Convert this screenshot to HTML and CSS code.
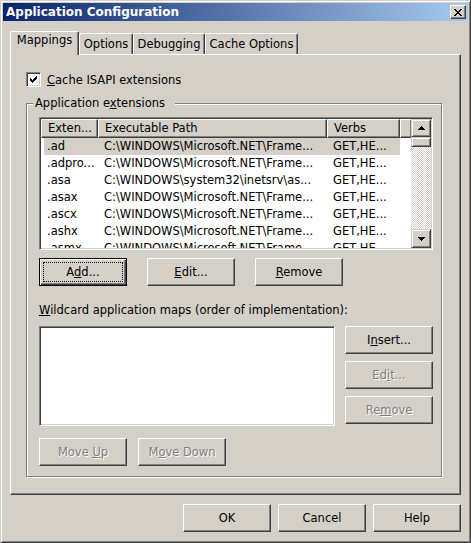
FILE: index.html
```html
<!DOCTYPE html>
<html>
<head>
<meta charset="utf-8">
<title>Application Configuration</title>
<link rel="stylesheet" href="styles.css">
</head>
<body>
<div class="window">
  <div class="titlebar">
    <span class="title">Application Configuration</span>
    <span class="close"><svg width="8" height="7" viewBox="0 0 8 7" shape-rendering="crispEdges"><path d="M0 0h2v1H0z M6 0h2v1H6z M1 1h2v1H1z M5 1h2v1H5z M2 2h4v1H2z M3 3h2v1H3z M2 4h4v1H2z M1 5h2v1H1z M5 5h2v1H5z M0 6h2v1H0z M6 6h2v1H6z" fill="#000"/></svg></span>
  </div>
  <div class="client">
    <div class="tabs">
      <div class="tab tab-active tab-mappings">Mappings</div>
      <div class="tab tab-options">Options</div>
      <div class="tab tab-debugging">Debugging</div>
      <div class="tab tab-cache">Cache Options</div>
    </div>
    <div class="panel">
      <div class="check-row">
        <span class="checkbox"><svg width="7" height="7" viewBox="0 0 7 7" shape-rendering="crispEdges"><path d="M6 0h1v1H6z M5 1h2v1H5z M0 2h1v1H0z M4 2h3v1H4z M0 3h2v1H0z M3 3h3v1H3z M0 4h5v1H0z M1 5h3v1H1z M2 6h1v1H2z" fill="#000"/></svg></span>
        <span><u>C</u>ache ISAPI extensions</span>
      </div>
      <div class="group">
        <div class="group-label">Application e<u>x</u>tensions</div>
        <div class="listview">
          <div class="lv-main">
            <div class="lv-header">
              <div class="hcell col-ext">Exten...</div>
              <div class="hcell col-path">Executable Path</div>
              <div class="hcell col-verbs">Verbs</div>
              <div class="hcell col-fill"></div>
            </div>
            <div class="lv-row selected"><div class="cell col-ext">.ad</div><div class="cell col-path">C:\WINDOWS\Microsoft.NET\Frame...</div><div class="cell col-verbs">GET,HE...</div></div>
            <div class="lv-row"><div class="cell col-ext">.adpro...</div><div class="cell col-path">C:\WINDOWS\Microsoft.NET\Frame...</div><div class="cell col-verbs">GET,HE...</div></div>
            <div class="lv-row"><div class="cell col-ext">.asa</div><div class="cell col-path">C:\WINDOWS\system32\inetsrv\as...</div><div class="cell col-verbs">GET,HE...</div></div>
            <div class="lv-row"><div class="cell col-ext">.asax</div><div class="cell col-path">C:\WINDOWS\Microsoft.NET\Frame...</div><div class="cell col-verbs">GET,HE...</div></div>
            <div class="lv-row"><div class="cell col-ext">.ascx</div><div class="cell col-path">C:\WINDOWS\Microsoft.NET\Frame...</div><div class="cell col-verbs">GET,HE...</div></div>
            <div class="lv-row"><div class="cell col-ext">.ashx</div><div class="cell col-path">C:\WINDOWS\Microsoft.NET\Frame...</div><div class="cell col-verbs">GET,HE...</div></div>
            <div class="lv-row"><div class="cell col-ext">.asmx</div><div class="cell col-path">C:\WINDOWS\Microsoft.NET\Frame...</div><div class="cell col-verbs">GET,HE...</div></div>
          </div>
          <div class="scrollbar">
            <div class="sb-btn sb-up"><svg width="7" height="4" viewBox="0 0 7 4" shape-rendering="crispEdges"><path d="M3 0h1v1H3z M2 1h3v1H2z M1 2h5v1H1z M0 3h7v1H0z" fill="#000"/></svg></div>
            <div class="sb-thumb"></div>
            <div class="sb-track"></div>
            <div class="sb-btn sb-down"><svg width="7" height="4" viewBox="0 0 7 4" shape-rendering="crispEdges"><path d="M0 0h7v1H0z M1 1h5v1H1z M2 2h3v1H2z M3 3h1v1H3z" fill="#000"/></svg></div>
          </div>
        </div>
        <div class="btn-row">
          <button class="btn btn-default"><span class="focus"><span>A<u>d</u>d...</span></span></button>
          <button class="btn"><span><u>E</u>dit...</span></button>
          <button class="btn"><span><u>R</u>emove</span></button>
        </div>
        <div class="wild-label"><u>W</u>ildcard application maps (order of implementation):</div>
        <div class="lower">
          <div class="listbox"></div>
          <div class="side-btns">
            <button class="btn"><span>I<u>n</u>sert...</span></button>
            <button class="btn btn-disabled"><span>Ed<u>i</u>t...</span></button>
            <button class="btn btn-disabled"><span>Re<u>m</u>ove</span></button>
          </div>
        </div>
        <div class="move-row">
          <button class="btn btn-disabled"><span>Move <u>U</u>p</span></button>
          <button class="btn btn-disabled"><span>M<u>o</u>ve Down</span></button>
        </div>
      </div>
    </div>
    <div class="footer">
      <button class="btn"><span>OK</span></button>
      <button class="btn"><span>Cancel</span></button>
      <button class="btn"><span>Help</span></button>
    </div>
  </div>
</div>
</body>
</html>
```

FILE: styles.css
```css
* { box-sizing: border-box; }
html, body { margin: 0; padding: 0; background: #d4d0c8; }
body {
  font-family: "DejaVu Sans", sans-serif;
  font-size: 11.5px;
  color: #000;
}
u { text-decoration: underline; text-underline-offset: 1px; }

.window {
  width: 471px;
  height: 543px;
  background: #d4d0c8;
  border: 1px solid;
  border-color: #d4d0c8 #404040 #404040 #d4d0c8;
  box-shadow: inset 1px 1px #fff, inset -1px -1px #808080;
  padding: 2px;
  display: flex;
  flex-direction: column;
}

.titlebar {
  height: 18px;
  flex: none;
  background: linear-gradient(90deg, #0a246a, #a6caf0);
  display: flex;
  align-items: center;
  justify-content: space-between;
  padding: 0 2px 0 3px;
  color: #fff;
  font-weight: bold;
  font-size: 12px;
  white-space: nowrap;
}
.close {
  width: 16px;
  height: 14px;
  background: #d4d0c8;
  border: 1px solid;
  border-color: #fff #404040 #404040 #fff;
  box-shadow: inset -1px -1px #808080;
  display: flex;
  align-items: center;
  justify-content: center;
}

.client {
  padding: 10px 7px 0 7px;
  display: flex;
  flex-direction: column;
}

.tabs {
  display: flex;
  align-items: flex-end;
  height: 23px;
}
.tab {
  height: 21px;
  border: 1px solid;
  border-bottom: none;
  border-color: #fff #404040 transparent #fff;
  box-shadow: inset -1px 0 #808080;
  border-radius: 2px 2px 0 0;
  display: flex;
  justify-content: center;
  align-items: flex-start;
  padding-top: 3px;
  line-height: 14px;
  background: #d4d0c8;
  white-space: nowrap;
}
.tab-active {
  height: 24px;
  margin-bottom: -1px;
  padding-top: 1px;
  position: relative;
  z-index: 1;
}
.tab-mappings { width: 69px; }
.tab-options { width: 54px; }
.tab-debugging { width: 72px; }
.tab-cache { width: 93px; }

.panel {
  width: 451px;
  height: 441px;
  border: 1px solid;
  border-color: #fff #404040 #404040 #fff;
  box-shadow: inset -1px -1px #808080;
  padding: 17px 0 0 15px;
}

.check-row {
  display: flex;
  align-items: center;
  gap: 6px;
  height: 15px;
  line-height: 14px;
}
.checkbox {
  width: 15px;
  height: 15px;
  background: #fff;
  border: 1px solid;
  border-color: #808080 #fff #fff #808080;
  box-shadow: inset 1px 1px #404040, inset -1px -1px #d4d0c8;
  display: flex;
  align-items: center;
  justify-content: center;
}

.group {
  width: 416px;
  margin-top: 16px;
  border: 1px solid #808080;
  box-shadow: inset 1px 1px #fff, 1px 1px #fff;
  padding: 0 0 10px 12px;
}
.group-label {
  width: fit-content;
  margin: -8px 0 0 -6px;
  padding: 0 10px 0 2px;
  background: #d4d0c8;
  line-height: 14px;
}

.listview {
  width: 394px;
  height: 133px;
  margin-top: 7px;
  border: 1px solid;
  border-color: #808080 #fff #fff #808080;
  box-shadow: inset 1px 1px #404040, inset -1px -1px #d4d0c8;
  padding: 1px;
  background: #fff;
  display: flex;
}
.lv-main {
  flex: 1;
  overflow: hidden;
  display: flex;
  flex-direction: column;
}
.lv-header {
  display: flex;
  height: 19px;
  flex: none;
}
.hcell {
  height: 19px;
  border: 1px solid;
  border-color: #fff #404040 #404040 #fff;
  box-shadow: inset -1px -1px #808080;
  background: #d4d0c8;
  padding: 0 4px 0 6px;
  line-height: 16px;
  white-space: nowrap;
  overflow: hidden;
  flex: none;
}
.col-ext { width: 57px; }
.col-path { width: 229px; }
.col-verbs { width: 73px; }
.hcell.col-fill { flex: 1; }

.lv-row {
  display: flex;
  flex: none;
  height: 17px;
  line-height: 17px;
  width: 359px;
}
.lv-row.selected {
  background: linear-gradient(#d4d0c8, #d4d0c8) 3px 0 / calc(100% - 3px) 100% no-repeat;
}
.cell {
  flex: none;
  padding-left: 6px;
  white-space: nowrap;
  overflow: hidden;
}

.scrollbar {
  width: 20px;
  flex: none;
  display: flex;
  flex-direction: column;
  background: repeating-conic-gradient(#d4d0c8 0 25%, #fff 0 50%) 0 0 / 2px 2px;
}
.sb-btn, .sb-thumb {
  flex: none;
  background: #d4d0c8;
  border: 1px solid;
  border-color: #d4d0c8 #404040 #404040 #d4d0c8;
  box-shadow: inset 1px 1px #fff, inset -1px -1px #808080;
  display: flex;
  align-items: center;
  justify-content: center;
}
.sb-up { height: 18px; }
.sb-thumb { height: 10px; }
.sb-track { flex: 1; }
.sb-down { height: 19px; }

.btn {
  width: 88px;
  height: 28px;
  margin: 0;
  padding: 0;
  font: inherit;
  color: #000;
  background: #d4d0c8;
  border: 1px solid;
  border-color: #fff #404040 #404040 #fff;
  box-shadow: inset -1px -1px #808080;
  display: flex;
  align-items: center;
  justify-content: center;
  white-space: nowrap;
}
.btn-default {
  border: 1px solid #000;
  box-shadow: inset 1px 1px #fff, inset -1px -1px #404040, inset -2px -2px #808080;
  padding: 3px;
}
.focus {
  flex: 1;
  align-self: stretch;
  border: 1px dotted #000;
  display: flex;
  align-items: center;
  justify-content: center;
}
.btn-disabled {
  color: #808080;
  text-shadow: 1px 1px 0 #fff;
}

.btn-row {
  display: flex;
  gap: 20px;
  margin-top: 8px;
}
.wild-label {
  margin-top: 17px;
  line-height: 14px;
}
.lower {
  display: flex;
  gap: 10px;
  margin-top: 9px;
}
.listbox {
  width: 296px;
  height: 100px;
  background: #fff;
  border: 1px solid;
  border-color: #808080 #fff #fff #808080;
  box-shadow: inset 1px 1px #404040, inset -1px -1px #d4d0c8;
}
.side-btns {
  display: flex;
  flex-direction: column;
  gap: 7px;
}
.move-row {
  display: flex;
  gap: 11px;
  margin-top: 12px;
}

.footer {
  display: flex;
  justify-content: flex-end;
  gap: 7px;
  margin-top: 9px;
}
```
